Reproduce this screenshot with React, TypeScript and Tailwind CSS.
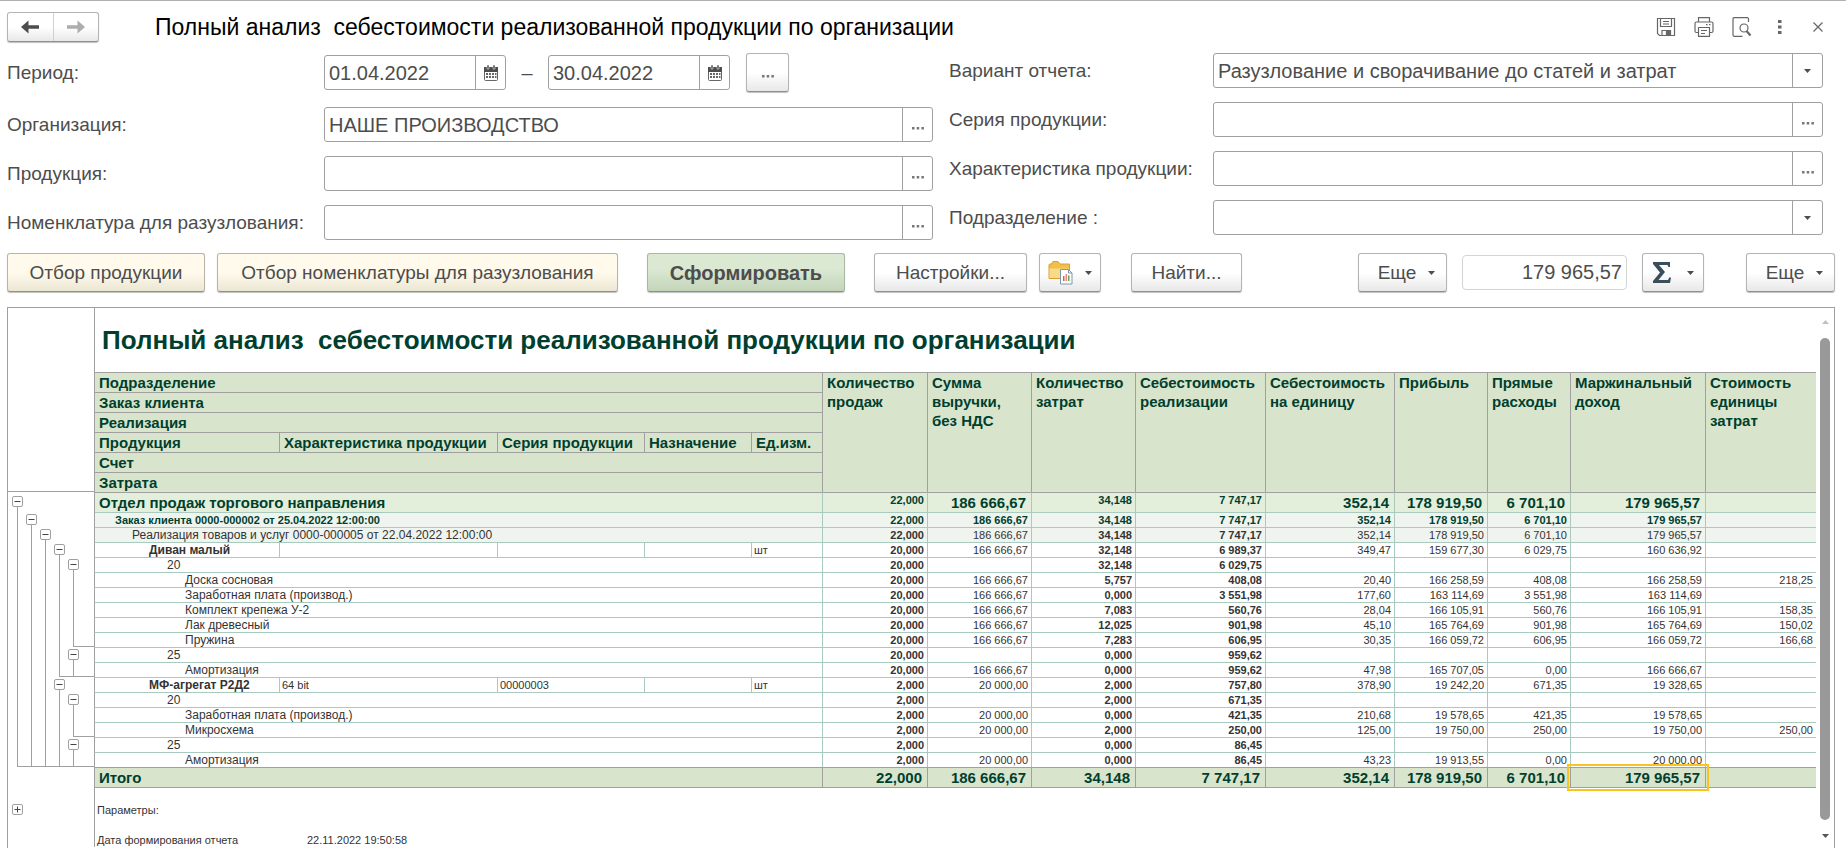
import type { ReactNode } from "react";
import clsx from "clsx";

type Row = {
    level: number;
    title: string;
    cells: string[];
    attrs?: string[];
    leaf?: boolean;
    // level of the outermost group that ends on this row
    end?: number;
};

const rows: Row[] = [
    { level: 0, title: "Отдел продаж торгового направления", cells: ["22,000", "186 666,67", "34,148", "7 747,17", "352,14", "178 919,50", "6 701,10", "179 965,57", ""] },
    { level: 1, title: "Заказ клиента 0000-000002 от 25.04.2022 12:00:00", cells: ["22,000", "186 666,67", "34,148", "7 747,17", "352,14", "178 919,50", "6 701,10", "179 965,57", ""] },
    { level: 2, title: "Реализация товаров и услуг 0000-000005 от 22.04.2022 12:00:00", cells: ["22,000", "186 666,67", "34,148", "7 747,17", "352,14", "178 919,50", "6 701,10", "179 965,57", ""] },
    { level: 3, title: "Диван малый", attrs: ["", "", "", "шт"], cells: ["20,000", "166 666,67", "32,148", "6 989,37", "349,47", "159 677,30", "6 029,75", "160 636,92", ""] },
    { level: 4, title: "20", cells: ["20,000", "", "32,148", "6 029,75", "", "", "", "", ""] },
    { level: 5, leaf: true, title: "Доска сосновая", cells: ["20,000", "166 666,67", "5,757", "408,08", "20,40", "166 258,59", "408,08", "166 258,59", "218,25"] },
    { level: 5, leaf: true, title: "Заработная плата (производ.)", cells: ["20,000", "166 666,67", "0,000", "3 551,98", "177,60", "163 114,69", "3 551,98", "163 114,69", ""] },
    { level: 5, leaf: true, title: "Комплект крепежа У-2", cells: ["20,000", "166 666,67", "7,083", "560,76", "28,04", "166 105,91", "560,76", "166 105,91", "158,35"] },
    { level: 5, leaf: true, title: "Лак древесный", cells: ["20,000", "166 666,67", "12,025", "901,98", "45,10", "165 764,69", "901,98", "165 764,69", "150,02"] },
    { level: 5, leaf: true, end: 4, title: "Пружина", cells: ["20,000", "166 666,67", "7,283", "606,95", "30,35", "166 059,72", "606,95", "166 059,72", "166,68"] },
    { level: 4, title: "25", cells: ["20,000", "", "0,000", "959,62", "", "", "", "", ""] },
    { level: 5, leaf: true, end: 3, title: "Амортизация", cells: ["20,000", "166 666,67", "0,000", "959,62", "47,98", "165 707,05", "0,00", "166 666,67", ""] },
    { level: 3, title: "МФ-агрегат Р2Д2", attrs: ["64 bit", "00000003", "", "шт"], cells: ["2,000", "20 000,00", "2,000", "757,80", "378,90", "19 242,20", "671,35", "19 328,65", ""] },
    { level: 4, title: "20", cells: ["2,000", "", "2,000", "671,35", "", "", "", "", ""] },
    { level: 5, leaf: true, title: "Заработная плата (производ.)", cells: ["2,000", "20 000,00", "0,000", "421,35", "210,68", "19 578,65", "421,35", "19 578,65", ""] },
    { level: 5, leaf: true, end: 4, title: "Микросхема", cells: ["2,000", "20 000,00", "2,000", "250,00", "125,00", "19 750,00", "250,00", "19 750,00", "250,00"] },
    { level: 4, title: "25", cells: ["2,000", "", "0,000", "86,45", "", "", "", "", ""] },
    { level: 5, leaf: true, end: 0, title: "Амортизация", cells: ["2,000", "20 000,00", "0,000", "86,45", "43,23", "19 913,55", "0,00", "20 000,00", ""] },
];

const totals = ["22,000", "186 666,67", "34,148", "7 747,17", "352,14", "178 919,50", "6 701,10", "179 965,57", ""];
const measures = ["Количество продаж", "Сумма выручки, без НДС", "Количество затрат", "Себестоимость реализации", "Себестоимость на единицу", "Прибыль", "Прямые расходы", "Маржинальный доход", "Стоимость единицы затрат"];
const indents = ["pl-1", "pl-5", "pl-[37px]", "pl-[54px]", "pl-[72px]", "pl-[90px]"];
const titleSizes = ["text-[15px]", "text-[11px]", "text-[12px]", "text-[12px]", "text-[12px]", "text-[12px]"];
const boldMeasures = [0, 2, 3];

const raised = "rounded-[3px] border border-[#b4b4b4] border-b-[#909090] bg-linear-to-b from-white from-50% to-[#e8e8e8] shadow-[0_1px_1px_rgba(0,0,0,0.25)]";

function Caret({ className }: { className?: string }) {
    return (
        <svg width="7" height="4" viewBox="0 0 7 4" className={className} aria-hidden="true">
            <path d="M0 0h7L3.500 4z" fill="currentColor" />
        </svg>
    );
}

function ToolButton({ children, tone = "plain", label, className }: { children: ReactNode; tone?: "plain" | "cream" | "green"; label?: string; className?: string }) {
    return (
        <button
            type="button"
            aria-label={label}
            className={clsx(
                "flex h-[39px] shrink-0 items-center justify-center whitespace-nowrap rounded-[3px] border shadow-[0_1px_1px_rgba(0,0,0,0.25)]",
                tone === "plain" && "border-[#b4b4b4] border-b-[#909090] bg-linear-to-b from-white from-50% to-[#e8e8e8] text-[19px]",
                tone === "cream" && "border-[#b9b5a6] border-b-[#95917f] bg-linear-to-b from-[#fffaeb] from-50% to-[#ece7d3] text-[19px]",
                tone === "green" && "border-[#a9b8a2] border-b-[#869480] bg-linear-to-b from-[#dbe9d3] from-40% to-[#c3d5b9] font-bold",
                className,
            )}
        >
            {children}
        </button>
    );
}

function CalendarIcon() {
    return (
        <svg width="14" height="16" viewBox="0 0 14 16" aria-hidden="true">
            <rect x="0.5" y="2.5" width="13" height="13" rx="1" fill="#fff" stroke="#666" />
            <path d="M0 2h14v5H0z" fill="#4d4d4d" />
            <path d="M3 0h2v4H3zM9 0h2v4H9z" fill="#4d4d4d" stroke="#fff" strokeWidth="0.5" />
            <path d="M2 8h2v2H2zM5 8h2v2H5zM8 8h2v2H8zM11 8h1.500v2H11zM2 11h2v2H2zM5 11h2v2H5zM8 11h2v2H8zM11 11h1.500v2H11z" fill="#666" />
        </svg>
    );
}

function Dots() {
    return (
        <svg width="12" height="3" viewBox="0 0 12 3" className="mt-2" aria-hidden="true">
            <path d="M0 0h2.500v2.500H0zM4.700 0h2.500v2.500H4.700zM9.400 0h2.500v2.500H9.400z" fill="#777" />
        </svg>
    );
}

function InputBox({ id, value = "", kind }: { id: string; value?: string; kind: "dots" | "date" | "select" }) {
    return (
        <div className={clsx("flex h-[35px] min-w-0 rounded-[3px] border border-[#a0a0a0] bg-white", kind === "date" ? "w-[182px]" : "flex-1")}>
            {kind === "select" ? (
                <select id={id} className="min-w-0 flex-1 appearance-none pl-1 outline-none">
                    <option>{value}</option>
                </select>
            ) : (
                <input id={id} defaultValue={value} className="min-w-0 flex-1 pl-1 outline-none" />
            )}
            {kind === "select" ? (
                <span className="flex w-[30px] items-center justify-center border-l border-[#a0a0a0]">
                    <Caret />
                </span>
            ) : (
                <button type="button" aria-label={kind === "date" ? "Календарь" : "Выбрать"} className="flex w-[30px] items-center justify-center border-l border-[#a0a0a0]">
                    {kind === "date" ? <CalendarIcon /> : <Dots />}
                </button>
            )}
        </div>
    );
}

function Field({ id, label, value, kind = "dots", labelWidth }: { id: string; label: string; value?: string; kind?: "dots" | "select"; labelWidth: string }) {
    return (
        <div className="flex items-center">
            <label htmlFor={id} className={clsx("shrink-0 whitespace-nowrap text-[19px]", labelWidth)}>
                {label}
            </label>
            <InputBox id={id} value={value} kind={kind} />
        </div>
    );
}

function Toggle({ open = true }: { open?: boolean }) {
    return (
        <button type="button" aria-label={open ? "Свернуть" : "Развернуть"} className="flex size-[11px] shrink-0 items-center justify-center rounded-[2px] border border-[#a0a0a0] bg-white">
            <svg width="7" height="7" viewBox="0 0 7 7" aria-hidden="true">
                <path d={open ? "M0.500 3h6v1h-6z" : "M0.500 3h6v1h-6zM3 0.500h1v6H3z"} fill="#444" />
            </svg>
        </button>
    );
}

function Gutter({ row }: { row: Row }) {
    const { level, end, leaf } = row;
    return (
        <div className={clsx("flex pl-[2px]", level === 0 ? "h-5" : "h-[15px]")}>
            {[0, 1, 2, 3, 4].map((slot) => {
                if (slot === level && !leaf) {
                    return (
                        <div key={slot} className={clsx("flex w-[14px] flex-col items-center pl-px", level === 0 ? "pt-1" : "pt-[2px]")}>
                            <Toggle />
                            <div className="w-px flex-1 bg-[#a0a0a0]" />
                        </div>
                    );
                }
                return (
                    <div key={slot} className="flex w-[14px]">
                        <div className={clsx("w-[7px] border-[#a0a0a0]", end !== undefined && slot > end && "border-b")} />
                        <div className={clsx("w-[7px] border-[#a0a0a0]", slot < level && "border-l", end !== undefined && slot >= end && "border-b")} />
                    </div>
                );
            })}
            <div className={clsx("flex-1 border-[#a0a0a0]", end !== undefined && "border-b")} />
        </div>
    );
}

function ReportRow({ row }: { row: Row }) {
    const { level, title, attrs, cells } = row;
    const tinted = level === 0 ? "bg-[#e3efdb]" : level < 3 ? "bg-[#eff4ee]" : "";
    const line = "border-t border-l border-[#a9cbbf]";
    const topLine = level === 0 ? "border-t-[#a0a0a0]" : "";
    return (
        <tr className={clsx("leading-[14px]", level < 2 && "font-bold text-[#003f2f]")}>
            <td className="p-0">
                <Gutter row={row} />
            </td>
            <td
                colSpan={attrs ? 1 : 5}
                className={clsx("overflow-hidden p-0", line, topLine, "border-l-[#a0a0a0]", tinted, indents[level], titleSizes[level], level === 3 && "font-bold")}
            >
                {title}
            </td>
            {attrs?.map((attr, i) => (
                <td key={i} className={clsx("p-0 pl-[2px]", line)}>
                    {attr}
                </td>
            ))}
            {cells.map((cell, i) => {
                const big = level === 0 && !boldMeasures.includes(i);
                return (
                    <td
                        key={i}
                        className={clsx("p-0 text-right", line, topLine, tinted, big ? "pr-[5px] text-[15px]" : "pr-[3px]", level === 0 && !big && "align-top", boldMeasures.includes(i) && "font-bold")}
                    >
                        {cell}
                    </td>
                );
            })}
        </tr>
    );
}

function Report() {
    const head = "border-t border-l border-[#a0a0a0] bg-[#d8e5cc] p-0 pl-1 text-left font-bold";
    return (
        <table className="w-full table-fixed border-separate border-spacing-0 whitespace-nowrap text-[11px] leading-[14px] text-[#333]">
            <colgroup>
                <col className="w-[86px]" />
                <col className="w-[185px]" />
                <col className="w-[218px]" />
                <col className="w-[147px]" />
                <col className="w-[107px]" />
                <col className="w-[71px]" />
                <col className="w-[105px]" />
                <col className="w-[104px]" />
                <col className="w-[104px]" />
                <col className="w-[130px]" />
                <col className="w-[129px]" />
                <col className="w-[93px]" />
                <col className="w-[83px]" />
                <col className="w-[135px]" />
                <col />
            </colgroup>
            <thead className="text-[15px] leading-[19px] text-[#003f2f]">
                <tr>
                    <td className="h-16 p-0" />
                    <td colSpan={14} className="border-l border-[#a0a0a0] p-0 pl-[7px]">
                        <h2 className="whitespace-pre text-[26px] font-bold leading-8">{"Полный анализ  себестоимости реализованной продукции по организации"}</h2>
                    </td>
                </tr>
                <tr>
                    <td rowSpan={6} className="border-b border-[#a0a0a0] p-0" />
                    <th colSpan={5} className={head}>Подразделение</th>
                    {measures.map((name) => (
                        <th key={name} rowSpan={6} className={clsx(head, "whitespace-normal pr-1 align-top")}>
                            {name}
                        </th>
                    ))}
                </tr>
                <tr><th colSpan={5} className={head}>Заказ клиента</th></tr>
                <tr><th colSpan={5} className={head}>Реализация</th></tr>
                <tr>
                    {["Продукция", "Характеристика продукции", "Серия продукции", "Назначение", "Ед.изм."].map((name) => (
                        <th key={name} className={head}>{name}</th>
                    ))}
                </tr>
                <tr><th colSpan={5} className={head}>Счет</th></tr>
                <tr><th colSpan={5} className={head}>Затрата</th></tr>
            </thead>
            <tbody>
                {rows.map((row, i) => (
                    <ReportRow key={i} row={row} />
                ))}
                <tr className="text-[15px] font-bold leading-[19px] text-[#003f2f]">
                    <td className="p-0" />
                    <td colSpan={5} className={head}>Итого</td>
                    {totals.map((total, i) => (
                        <td key={i} className="relative border-t border-l border-[#a0a0a0] bg-[#d8e5cc] p-0 pr-[5px] text-right">
                            {total}
                            {i === 7 && <div className="absolute -inset-1 z-10 border-2 border-[#fac41e]" />}
                        </td>
                    ))}
                </tr>
                <tr>
                    <td className="h-[15px] p-0" />
                    <td colSpan={14} className="border-t border-l border-[#a0a0a0] p-0" />
                </tr>
                <tr>
                    <td className="h-[15px] p-0 pl-1"><Toggle open={false} /></td>
                    <td colSpan={14} className="border-l border-[#a0a0a0] p-0 pl-[2px]">Параметры:</td>
                </tr>
                <tr>
                    <td className="h-[15px] p-0" />
                    <td colSpan={14} className="border-l border-[#a0a0a0] p-0" />
                </tr>
                <tr>
                    <td className="h-[15px] p-0" />
                    <td className="border-l border-[#a0a0a0] p-0 pl-[2px]">Дата формирования отчета</td>
                    <td colSpan={13} className="p-0 pl-7">22.11.2022 19:50:58</td>
                </tr>
            </tbody>
        </table>
    );
}

function TitleBar() {
    return (
        <header className="flex h-[52px] items-center pr-3 pb-[9px] pt-2">
            <div className={clsx("flex h-[30px] w-[92px]", raised)}>
                <button type="button" aria-label="Назад" className="flex flex-1 items-center justify-center border-r border-[#d0d0d0]">
                    <svg width="18" height="14" viewBox="0 0 18 14" aria-hidden="true">
                        <path d="M7.500 .500v4.700H18v3.600H7.500v4.700L0 7z" fill="#4d4d4d" />
                    </svg>
                </button>
                <button type="button" aria-label="Вперед" className="flex flex-1 items-center justify-center">
                    <svg width="18" height="14" viewBox="0 0 18 14" aria-hidden="true">
                        <path d="M10.500 .500v4.700H0v3.600h10.500v4.700L18 7z" fill="#adadad" />
                    </svg>
                </button>
            </div>
            <h1 className="ml-14 flex-1 whitespace-pre text-[23px] leading-7 text-black">{"Полный анализ  себестоимости реализованной продукции по организации"}</h1>
            <div className="flex items-center text-[#666]">
                <button type="button" aria-label="Сохранить">
                    <svg width="20" height="20" viewBox="0 0 20 20" fill="none" stroke="currentColor" strokeWidth="1.200" aria-hidden="true">
                        <path d="M1.500 1.500h17v17h-15l-2-2z" />
                        <path d="M4.500 1.500v8h11v-8M7 4.500h6M7 7h6M6 18.500v-5h8.500v5" />
                        <path d="M10.500 14.500h3v3.500h-3z" fill="currentColor" />
                    </svg>
                </button>
                <button type="button" aria-label="Печать" className="ml-[18px]">
                    <svg width="20" height="20" viewBox="0 0 20 20" fill="none" stroke="currentColor" strokeWidth="1.200" aria-hidden="true">
                        <path d="M4.500 5V.700h11V5M4.500 15.500h-2q-1.500 0-1.500-1.500V6.500Q1 5 2.500 5h15Q19 5 19 6.500V14q0 1.500-1.500 1.500h-2" />
                        <path d="M4.500 10.500h11v8.800h-11zM7 13.500h6M7 16.500h4M12 7.700h1.500M15 7.700h1.500" />
                    </svg>
                </button>
                <button type="button" aria-label="Предварительный просмотр" className="ml-[18px]">
                    <svg width="20" height="20" viewBox="0 0 20 20" fill="none" stroke="currentColor" strokeWidth="1.200" aria-hidden="true">
                        <path d="M16.500 5V2q0-1.300-1.300-1.300H2.300Q1 .700 1 2v16q0 1.300 1.300 1.300h8.200" />
                        <circle cx="12" cy="11" r="4" />
                        <path d="M14.500 14l4 4.500" strokeWidth="2.200" />
                    </svg>
                </button>
                <button type="button" aria-label="Еще" className="ml-[26px]">
                    <svg width="4" height="14" viewBox="0 0 4 14" aria-hidden="true">
                        <path d="M0 0h3.500v3H0zM0 5.500h3.500v3H0zM0 11h3.500v3H0z" fill="currentColor" />
                    </svg>
                </button>
                <button type="button" aria-label="Закрыть" className="ml-[31px]">
                    <svg width="10" height="10" viewBox="0 0 10 10" stroke="currentColor" strokeWidth="1.200" aria-hidden="true">
                        <path d="M.500 .500l9 9M9.500 .500l-9 9" />
                    </svg>
                </button>
            </div>
        </header>
    );
}

function Filters() {
    return (
        <form className="grid grid-cols-[926fr_874fr] gap-x-4 pr-3">
            <div className="flex flex-col gap-[14px]">
                <div className="mb-px flex h-[39px] items-center">
                    <label htmlFor="from" className="w-[317px] shrink-0 text-[19px]">Период:</label>
                    <InputBox id="from" value="01.04.2022" kind="date" />
                    <label htmlFor="to" className="w-[42px] text-center">–</label>
                    <InputBox id="to" value="30.04.2022" kind="date" />
                    <button type="button" aria-label="Выбрать период" className={clsx("ml-4 flex h-[39px] w-[43px] items-center justify-center", raised)}>
                        <Dots />
                    </button>
                </div>
                <Field id="org" label="Организация:" value="НАШЕ ПРОИЗВОДСТВО" labelWidth="w-[317px]" />
                <Field id="product" label="Продукция:" labelWidth="w-[317px]" />
                <Field id="nomenclature" label="Номенклатура для разузлования:" labelWidth="w-[317px]" />
            </div>
            <div className="flex flex-col gap-[14px]">
                <Field id="variant" label="Вариант отчета:" value="Разузлование и сворачивание до статей и затрат" kind="select" labelWidth="w-[264px]" />
                <Field id="series" label="Серия продукции:" labelWidth="w-[264px]" />
                <Field id="feature" label="Характеристика продукции:" labelWidth="w-[264px]" />
                <Field id="department" label="Подразделение :" kind="select" labelWidth="w-[264px]" />
            </div>
        </form>
    );
}

function Toolbar() {
    return (
        <div className="mt-[13px] flex items-center">
            <ToolButton tone="cream" className="w-[198px]">Отбор продукции</ToolButton>
            <ToolButton tone="cream" className="ml-3 w-[401px]">Отбор номенклатуры для разузлования</ToolButton>
            <ToolButton tone="green" className="ml-[29px] w-[198px]">Сформировать</ToolButton>
            <ToolButton className="ml-[29px] w-[153px]">Настройки...</ToolButton>
            <ToolButton label="Варианты отчета" className="ml-3 w-[62px] gap-3">
                <svg width="25" height="25" viewBox="0 0 25 25" aria-hidden="true">
                    <path d="M1 5q0-1 1-1h1.500L5 1.500h5L12 4h9.500v14.500H1z" fill="#f0bf4c" stroke="#d9a02f" />
                    <path d="M1.500 8.500h19.500v9.500H1.500z" fill="#f9da86" />
                    <path d="M12.500 9.500h8l3.500 3.500v11H12.500z" fill="#fff" stroke="#7d98ae" />
                    <path d="M20.500 9.500V13H24" fill="none" stroke="#7d98ae" />
                    <path d="M15 16h1.500v5H15z" fill="#e2574c" />
                    <path d="M17.500 14h1.500v7h-1.500z" fill="#e98a80" />
                    <path d="M20 15.500h1.500V21H20z" fill="#5aa65a" />
                </svg>
                <Caret />
            </ToolButton>
            <ToolButton className="ml-[30px] w-[111px]">Найти...</ToolButton>
            <ToolButton className="ml-auto w-[89px] gap-3 pl-2">Еще <Caret /></ToolButton>
            <input aria-label="Сумма" defaultValue="179 965,57" className="ml-[15px] h-[35px] w-[165px] rounded-[4px] border border-[#d4d4d4] pr-1 text-right outline-none" />
            <ToolButton label="Сумма выделенных ячеек" className="ml-[15px] w-[62px] gap-4">
                <svg width="18" height="21" viewBox="0 0 18 21" aria-hidden="true">
                    <path d="M0 0h17v5h-1.500l-1-2H6l6 7-6.500 8H15l1.300-2.500H18L17 21H0v-2l7-8.500L0 2z" fill="#3b4e5c" />
                </svg>
                <Caret />
            </ToolButton>
            <ToolButton className="ml-[42px] w-[89px] gap-3 pl-2">Еще <Caret /></ToolButton>
        </div>
    );
}

export default function App() {
    return (
        <div className="flex h-screen flex-col overflow-hidden border-t border-[#b0b0b0] bg-white pl-[7px] pr-[11px] font-['Liberation_Sans',Arial,sans-serif] text-[20px] leading-6 text-[#4d4d4d]">
            <TitleBar />
            <Filters />
            <Toolbar />
            <main className="mt-[15px] flex min-h-0 flex-1 border-x border-t border-[#a0a0a0]">
                <div className="min-w-0 flex-1 overflow-hidden">
                    <Report />
                </div>
                <div className="flex w-[18px] flex-col items-center pb-[10px] pt-3">
                    <Caret className="rotate-180 text-[#c0c0c0]" />
                    <div className="my-[14px] w-[10px] flex-1 rounded-full bg-[#999]" />
                    <Caret className="text-[#555]" />
                </div>
            </main>
        </div>
    );
}
